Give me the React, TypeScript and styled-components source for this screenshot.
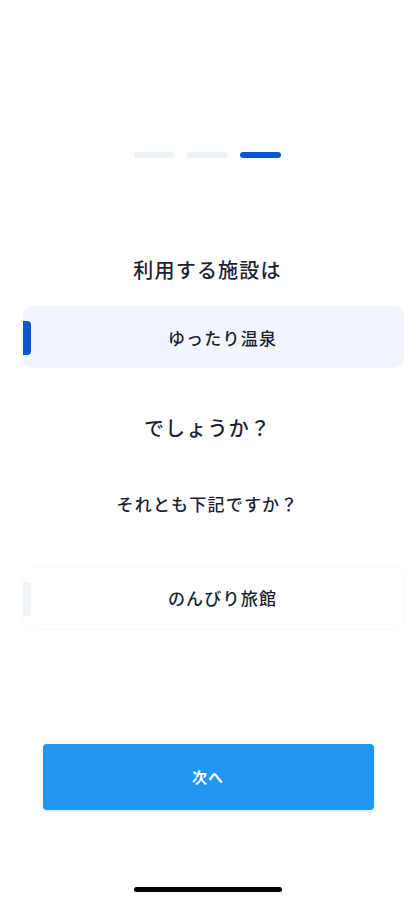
import React from "react";
import styled, { createGlobalStyle } from "styled-components";

const Global = createGlobalStyle`
  html, body { margin: 0; padding: 0; background: #ffffff; }
  body { font-family: "Noto Sans CJK JP", "Noto Sans", sans-serif; color: #1d1f33; }
`;

const Screen = styled.div`
  width: 415px;
  height: 900px;
  display: flex;
  flex-direction: column;
  align-items: center;
  box-sizing: border-box;
  padding-top: 152px;
`;

const Steps = styled.div`
  display: flex;
  gap: 12px;
`;

const Step = styled.div<{ $active?: boolean }>`
  width: 41px;
  height: 6px;
  border-radius: 3px;
  background: ${(p) => (p.$active ? "#0b57cf" : "#eff3f8")};
`;

const Title = styled.div<{ $mt: number; $size: number }>`
  margin-top: ${(p) => p.$mt}px;
  font-size: ${(p) => p.$size}px;
  line-height: 1.4;
  font-weight: 500;
  letter-spacing: 1.2px;
  color: #1d1f33;
  text-align: center;
`;

const Option = styled.div<{ $selected?: boolean; $mt: number }>`
  position: relative;
  margin-top: ${(p) => p.$mt}px;
  align-self: flex-start;
  margin-left: 23px;
  width: 381px;
  height: 62px;
  box-sizing: border-box;
  border-radius: 10px;
  background: ${(p) => (p.$selected ? "#f2f6fc" : "#ffffff")};
  box-shadow: ${(p) => (p.$selected ? "none" : "0 0 3px rgba(0,0,0,0.06)")};
  display: flex;
  align-items: center;
  justify-content: center;
  padding-left: 18px;
  font-size: 17px;
  font-weight: 500;
  letter-spacing: 1.2px;
  color: #1d1f33;
`;

const Marker = styled.span<{ $selected?: boolean }>`
  position: absolute;
  left: 0;
  top: 15px;
  width: 8px;
  height: 34px;
  border-radius: 0 4px 4px 0;
  background: ${(p) => (p.$selected ? "#0b57cf" : "#f1f4f8")};
`;

const NextButton = styled.button`
  margin-top: 115px;
  width: 331px;
  height: 66px;
  margin-left: 1px;
  border: none;
  border-radius: 4px;
  background: #2196f3;
  box-shadow: 0 1px 3px rgba(0, 0, 0, 0.15);
  color: #ffffff;
  font-family: "Noto Sans CJK JP", sans-serif;
  font-size: 15px;
  font-weight: 700;
  letter-spacing: 1px;
`;

const HomeBar = styled.div`
  margin-top: 77px;
  width: 148px;
  height: 5px;
  border-radius: 3px;
  background: #000000;
`;

export default function App() {
  return (
    <>
      <Global />
      <Screen>
        <Steps>
          <Step />
          <Step />
          <Step $active />
        </Steps>
        <Title $mt={98} $size={20}>利用する施設は</Title>
        <Option $selected $mt={22}>
          <Marker $selected />
          ゆったり温泉
        </Option>
        <Title $mt={46} $size={20}>でしょうか？</Title>
        <Title $mt={50} $size={17}>それとも下記ですか？</Title>
        <Option $mt={51}>
          <Marker />
          のんびり旅館
        </Option>
        <NextButton>次へ</NextButton>
        <HomeBar />
      </Screen>
    </>
  );
}
